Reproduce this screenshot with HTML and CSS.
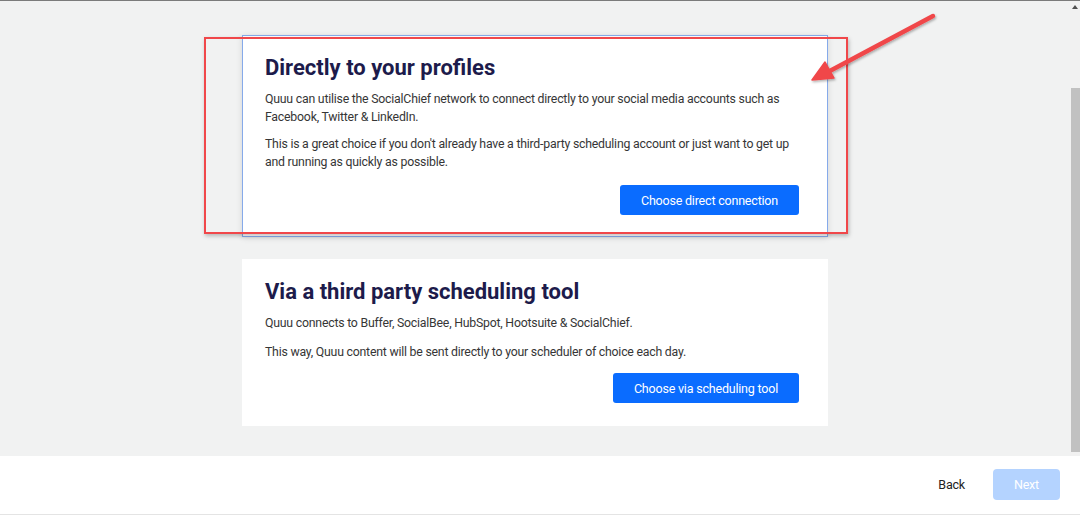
FILE: index.html
```html
<!DOCTYPE html>
<html lang="en">
<head>
  <meta charset="UTF-8">
  <meta name="viewport" content="width=device-width, initial-scale=1.0">
  <title>Connect your profiles</title>
  <link rel="stylesheet" href="styles.css">
</head>
<body>
  <div class="window">
    <div class="content-row">
      <main class="main">
        <section class="option option-active">
          <h2>Directly to your profiles</h2>
          <p>Quuu can utilise the SocialChief network to connect directly to your social media accounts such as Facebook, Twitter &amp; LinkedIn.</p>
          <p>This is a great choice if you don't already have a third-party scheduling account or just want to get up and running as quickly as possible.</p>
          <div class="option-actions">
            <button class="btn btn-primary">Choose direct connection</button>
          </div>
        </section>

        <section class="option">
          <h2>Via a third party scheduling tool</h2>
          <p>Quuu connects to Buffer, SocialBee, HubSpot, Hootsuite &amp; SocialChief.</p>
          <p>This way, Quuu content will be sent directly to your scheduler of choice each day.</p>
          <div class="option-actions">
            <button class="btn btn-primary">Choose via scheduling tool</button>
          </div>
        </section>
      </main>
      <div class="scrollbar">
        <div class="scroll-arrow"></div>
        <div class="scroll-thumb"></div>
      </div>
    </div>

    <footer class="footer">
      <button class="btn btn-link">Back</button>
      <button class="btn btn-disabled">Next</button>
    </footer>

    <!-- annotation drawn over the screenshot -->
    <div class="highlight-box"></div>
    <svg class="arrow" width="1080" height="515" viewBox="0 0 1080 515">
      <defs>
        <filter id="arrow-shadow" x="-20%" y="-20%" width="140%" height="140%">
          <feDropShadow dx="1" dy="1.5" stdDeviation="1.2" flood-color="#000" flood-opacity="0.3"/>
        </filter>
      </defs>
      <g filter="url(#arrow-shadow)" fill="#f0474a" stroke="#f0474a">
        <line x1="933" y1="15" x2="826" y2="72" stroke-width="4.5" stroke-linecap="round"/>
        <polygon points="812,79 825,61 834,77" stroke-width="1.5" stroke-linejoin="round"/>
      </g>
    </svg>
  </div>
</body>
</html>
```

FILE: styles.css
```css
* {
  box-sizing: border-box;
}
body {
  margin: 0;
  font-family: Roboto, "Noto Sans", Arial, sans-serif;
  color: #363636;
  background: #fff;
}
.window {
  position: relative;
  width: 1080px;
  height: 515px;
  overflow: hidden;
  border-top: 1px solid #7b7b7b;
  display: flex;
  flex-direction: column;
}
.content-row {
  display: flex;
  height: 455px;
  background: #f1f2f2;
}
.main {
  flex: 1;
  display: flex;
  flex-direction: column;
  align-items: center;
  gap: 22px;
  padding-top: 34px;
}
.option {
  width: 586px;
  background: #fff;
  padding: 21px 29px 23px 23px;
}
.option-active {
  border: 1px solid #86aaea;
  padding: 20px 28px 21px 22px;
  box-shadow: 0 1px 6px rgba(0, 0, 0, 0.12);
}
.option h2 {
  margin: 0 0 10px;
  font-size: 22px;
  line-height: 24px;
  font-weight: 700;
  color: #1d1b4b;
}
.option p {
  margin: 0 0 9px;
  font-size: 12.3px;
  letter-spacing: -0.22px;
  line-height: 18px;
}
.option:not(.option-active) p {
  margin-bottom: 11px;
}
.option-actions {
  display: flex;
  justify-content: flex-end;
  margin-top: 14px;
}
.option:not(.option-active) .option-actions {
  margin-top: 12px;
}
.btn {
  font-family: inherit;
  font-size: 12.5px;
  letter-spacing: -0.2px;
  border: none;
  cursor: pointer;
  border-radius: 3px;
}
.btn-primary {
  height: 30px;
  padding: 0 21px;
  background: #0a6cff;
  color: #fff;
}
.scrollbar {
  width: 10px;
  display: flex;
  flex-direction: column;
  align-items: center;
  background: #f1f1f1;
}
.scroll-arrow {
  margin-top: 4px;
  width: 0;
  height: 0;
  border-left: 3px solid transparent;
  border-right: 3px solid transparent;
  border-bottom: 4px solid #505050;
}
.scroll-thumb {
  margin-top: 79px;
  width: 9px;
  height: 364px;
  background: #c1c1c1;
}
.footer {
  flex: 1;
  display: flex;
  justify-content: flex-end;
  align-items: center;
  gap: 14px;
  padding: 0 20px 2px 0;
  background: #fff;
  border-bottom: 1px solid #e4e4e4;
}
.btn-link {
  background: none;
  color: #222;
  padding: 0 14px;
}
.btn-disabled {
  width: 67px;
  height: 31px;
  background: #b4d3ff;
  color: #fff;
  border-radius: 4px;
}
.highlight-box {
  position: absolute;
  left: 204px;
  top: 36px;
  width: 644px;
  height: 197px;
  border: 2px solid #f0474a;
  box-shadow: 1px 2px 4px rgba(0, 0, 0, 0.25);
}
.arrow {
  position: absolute;
  left: 0;
  top: 0;
  pointer-events: none;
}
```
